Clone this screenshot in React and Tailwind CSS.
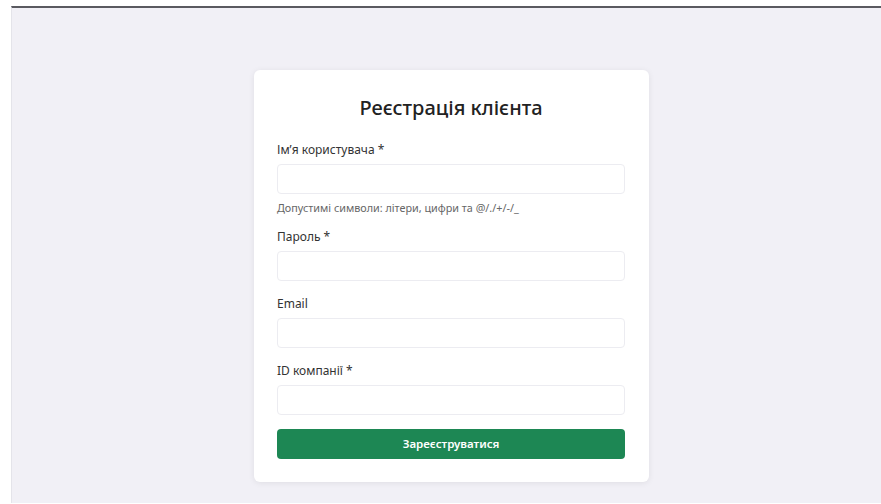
export default function App() {
  const font = { fontFamily: '"Noto Sans", "Open Sans", sans-serif' };
  return (
    <div className="w-[881px] h-[504px] bg-white pl-[11px] pt-[6px] pb-[1px]" style={font}>
      <div className="h-full border-t-2 border-l border-t-[#5a5a60] border-l-[#e4e4ea] bg-[#f1f0f6] pt-[62px]">
        <div className="ml-[242px] w-[395px] rounded-md bg-white pl-[23px] pr-[24px] pt-[24px] pb-[23px] shadow-[0_1px_6px_rgba(0,0,0,0.08)]">
          <h1 className="text-center text-[20px] leading-[28px] font-medium text-[#222]">Реєстрація клієнта</h1>

          <label className="mt-[19px] block text-[12px] leading-[18px] text-[#333]">Ім’я користувача *</label>
          <input className="mt-[5px] block h-[30px] w-full rounded border border-[#ececf1] bg-white" />
          <p className="mt-[7px] text-[10.8px] leading-[14px] text-[#666]">Допустимі символи: літери, цифри та @/./+/-/_</p>

          <label className="mt-[13px] block text-[12px] leading-[18px] text-[#333]">Пароль *</label>
          <input type="password" className="mt-[5px] block h-[30px] w-full rounded border border-[#ececf1] bg-white" />

          <label className="mt-[14px] block text-[12px] leading-[18px] text-[#333]">Email</label>
          <input className="mt-[5px] block h-[30px] w-full rounded border border-[#ececf1] bg-white" />

          <label className="mt-[14px] block text-[12px] leading-[18px] text-[#333]">ID компанії *</label>
          <input className="mt-[5px] block h-[30px] w-full rounded border border-[#ececf1] bg-white" />

          <button className="mt-[14px] block h-[30px] w-full rounded bg-[#1d8754] text-[11.5px] font-semibold text-white">Зареєструватися</button>
        </div>
      </div>
    </div>
  );
}
